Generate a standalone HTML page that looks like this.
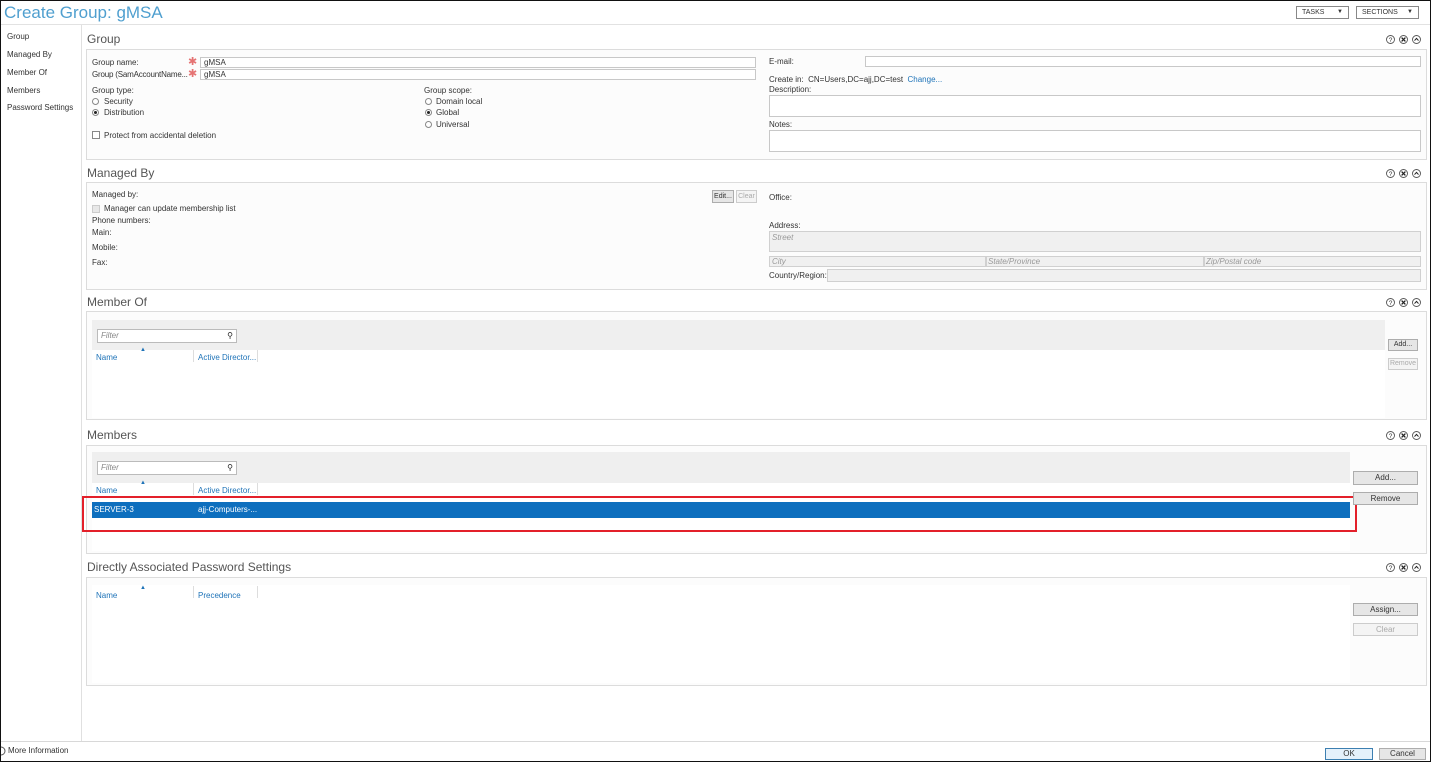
<!DOCTYPE html>
<html><head><meta charset="utf-8"><style>
*{margin:0;padding:0;box-sizing:border-box}
body{width:1431px;height:762px;position:relative;overflow:hidden;background:#fff;font-family:"Liberation Sans",sans-serif;color:#333}
.a{position:absolute}
.t{position:absolute;font-size:8px;white-space:nowrap;color:#333;line-height:10px}
.h{position:absolute;font-size:12px;color:#555;white-space:nowrap;line-height:14px}
.box{position:absolute;border:1px solid #dcdcdc;background:#fcfcfc}
.in{position:absolute;border:1px solid #c8c8c8;background:#fff;height:11px}
.gr{position:absolute;border:1px solid #d0d0d0;background:#f0f0f0}
.btn{position:absolute;border:1px solid #adadad;background:#e6e6e6;font-size:8px;text-align:center;line-height:10px;color:#333}
.dis{color:#aaa;border-color:#ccc;background:#f4f4f4}
.rad{position:absolute;width:7px;height:7px;border:1px solid #888;border-radius:50%;background:#fff}
.rad.on::after{content:"";position:absolute;left:1px;top:1px;width:3px;height:3px;border-radius:50%;background:#222}
.cb{position:absolute;width:8px;height:8px;border:1px solid #888;background:#fff}
.ic{position:absolute}
.lnk{color:#1e73b8}
.star{position:absolute;color:#e57373;font-size:11px;line-height:10px}
.grid{position:absolute;background:#fff}
.tb{position:absolute;background:#efefef}
.flt{position:absolute;border:1px solid #bbb;background:#fff;height:14px;font-size:8px;font-style:italic;color:#888;line-height:12px;padding-left:3px}
</style></head><body>
<svg width="0" height="0" style="position:absolute"><defs>
<g id="icons">
<circle cx="4.5" cy="4.5" r="4" fill="#fff" stroke="#555" stroke-width="0.9"/>
<text x="4.5" y="7" font-size="6.5" text-anchor="middle" font-family="Liberation Sans" fill="#333">?</text>
<circle cx="17.5" cy="4.5" r="4" fill="#fff" stroke="#555" stroke-width="0.9"/>
<path d="M15.6 2.6 L19.4 6.4 M19.4 2.6 L15.6 6.4" stroke="#222" stroke-width="1.3"/>
<circle cx="30.5" cy="4.5" r="4" fill="#fff" stroke="#555" stroke-width="0.9"/>
<path d="M28.5 5.6 L30.5 3.4 L32.5 5.6" fill="none" stroke="#222" stroke-width="1"/>
</g></defs></svg>
<div class="a" style="left:0;top:0;width:1431px;height:762px;border:1px solid #111;z-index:10;pointer-events:none"></div>
<div class="a" style="left:0;top:0;width:1431px;height:25px;border-bottom:1px solid #e2e2e2"></div>
<div class="a" style="left:4px;top:3px;font-size:17px;color:#4f9fcf;line-height:20px">Create Group: gMSA</div>
<div class="a" style="left:1296px;top:6px;width:53px;height:13px;border:1px solid #888;font-size:7px;line-height:11px;padding-left:5px">TASKS<span style="position:absolute;right:5px;font-size:6px">▼</span></div>
<div class="a" style="left:1356px;top:6px;width:63px;height:13px;border:1px solid #888;font-size:7px;line-height:11px;padding-left:5px">SECTIONS<span style="position:absolute;right:5px;font-size:6px">▼</span></div>
<div class="a" style="left:81px;top:25px;width:1px;height:716px;background:#e0e0e0"></div>
<div class="t" style="left:7px;top:32px">Group</div>
<div class="t" style="left:7px;top:50px">Managed By</div>
<div class="t" style="left:7px;top:68px">Member Of</div>
<div class="t" style="left:7px;top:86px">Members</div>
<div class="t" style="left:7px;top:103px">Password Settings</div>

<div class="h" style="left:87px;top:32px">Group</div>
<div class="box" style="left:86px;top:49px;width:1341px;height:111px"></div>
<div class="t" style="left:92px;top:58px">Group name:</div>
<div class="star" style="left:188px;top:57px">✱</div>
<div class="in" style="left:200px;top:57px;width:556px"></div><div class="t" style="left:204px;top:58px">gMSA</div>
<div class="t" style="left:92px;top:70px;letter-spacing:-0.2px">Group (SamAccountName...</div>
<div class="star" style="left:188px;top:69px">✱</div>
<div class="in" style="left:200px;top:69px;width:556px"></div><div class="t" style="left:204px;top:70px">gMSA</div>
<div class="t" style="left:92px;top:86px">Group type:</div>
<div class="rad" style="left:92px;top:98px"></div><div class="t" style="left:104px;top:97px">Security</div>
<div class="rad on" style="left:92px;top:109px"></div><div class="t" style="left:104px;top:108px">Distribution</div>
<div class="cb" style="left:92px;top:131px"></div><div class="t" style="left:104px;top:131px">Protect from accidental deletion</div>
<div class="t" style="left:424px;top:86px">Group scope:</div>
<div class="rad" style="left:425px;top:98px"></div><div class="t" style="left:436px;top:97px">Domain local</div>
<div class="rad on" style="left:425px;top:109px"></div><div class="t" style="left:436px;top:108px">Global</div>
<div class="rad" style="left:425px;top:121px"></div><div class="t" style="left:436px;top:120px">Universal</div>
<div class="t" style="left:769px;top:57px">E-mail:</div>
<div class="in" style="left:865px;top:56px;width:556px"></div>
<div class="t" style="left:769px;top:75px">Create in: &nbsp;CN=Users,DC=ajj,DC=test &nbsp;<span class="lnk">Change...</span></div>
<div class="t" style="left:769px;top:85px">Description:</div>
<div class="in" style="left:769px;top:95px;width:652px;height:22px"></div>
<div class="t" style="left:769px;top:120px">Notes:</div>
<div class="in" style="left:769px;top:130px;width:652px;height:22px"></div>

<div class="h" style="left:87px;top:166px">Managed By</div>
<div class="box" style="left:86px;top:182px;width:1341px;height:108px"></div>
<div class="t" style="left:92px;top:190px">Managed by:</div>
<div class="cb" style="left:92px;top:205px;background:#e8e8e8;border-color:#ccc"></div><div class="t" style="left:104px;top:204px">Manager can update membership list</div>
<div class="t" style="left:92px;top:216px">Phone numbers:</div>
<div class="t" style="left:92px;top:228px">Main:</div>
<div class="t" style="left:92px;top:243px">Mobile:</div>
<div class="t" style="left:92px;top:258px">Fax:</div>
<div class="btn" style="left:712px;top:190px;width:22px;height:13px;line-height:11px;font-size:7px">Edit...</div>
<div class="btn dis" style="left:736px;top:190px;width:21px;height:13px;line-height:11px;font-size:7px">Clear</div>
<div class="t" style="left:769px;top:193px">Office:</div>
<div class="t" style="left:769px;top:221px">Address:</div>
<div class="gr" style="left:769px;top:231px;width:652px;height:21px"></div><div class="t" style="left:772px;top:233px;font-style:italic;color:#999">Street</div>
<div class="gr" style="left:769px;top:256px;width:217px;height:11px"></div><div class="t" style="left:772px;top:257px;font-style:italic;color:#999">City</div>
<div class="gr" style="left:986px;top:256px;width:218px;height:11px"></div><div class="t" style="left:988px;top:257px;font-style:italic;color:#999">State/Province</div>
<div class="gr" style="left:1204px;top:256px;width:217px;height:11px"></div><div class="t" style="left:1206px;top:257px;font-style:italic;color:#999">Zip/Postal code</div>
<div class="t" style="left:769px;top:271px">Country/Region:</div>
<div class="gr" style="left:827px;top:269px;width:594px;height:13px"></div>

<div class="h" style="left:87px;top:295px">Member Of</div>
<div class="box" style="left:86px;top:311px;width:1341px;height:109px"></div>
<div class="tb" style="left:92px;top:320px;width:1293px;height:30px"></div>
<div class="grid" style="left:92px;top:350px;width:1293px;height:68px"></div>
<div class="flt" style="left:97px;top:329px;width:140px">Filter<span style="position:absolute;right:3px;font-style:normal;color:#222">⚲</span></div>
<div class="t lnk" style="left:96px;top:353px">Name</div><div class="t lnk" style="left:140px;top:345px;font-size:6px">▲</div>
<div class="a" style="left:193px;top:350px;width:1px;height:12px;background:#ddd"></div>
<div class="t lnk" style="left:198px;top:353px">Active Director...</div>
<div class="a" style="left:257px;top:350px;width:1px;height:12px;background:#ddd"></div>
<div class="btn" style="left:1388px;top:339px;width:30px;height:12px;font-size:7px">Add...</div>
<div class="btn dis" style="left:1388px;top:358px;width:30px;height:12px;font-size:7px">Remove</div>

<div class="h" style="left:87px;top:428px">Members</div>
<div class="box" style="left:86px;top:445px;width:1341px;height:109px"></div>
<div class="tb" style="left:92px;top:452px;width:1258px;height:31px"></div>
<div class="grid" style="left:92px;top:483px;width:1258px;height:68px"></div>
<div class="flt" style="left:97px;top:461px;width:140px">Filter<span style="position:absolute;right:3px;font-style:normal;color:#222">⚲</span></div>
<div class="t lnk" style="left:96px;top:486px">Name</div><div class="t lnk" style="left:140px;top:478px;font-size:6px">▲</div>
<div class="a" style="left:193px;top:483px;width:1px;height:12px;background:#ddd"></div>
<div class="t lnk" style="left:198px;top:486px">Active Director...</div>
<div class="a" style="left:257px;top:483px;width:1px;height:12px;background:#ddd"></div>
<div class="a" style="left:92px;top:502px;width:1258px;height:16px;background:#0e6fbe"></div>
<div class="t" style="left:94px;top:505px;color:#fff">SERVER-3</div>
<div class="t" style="left:198px;top:505px;color:#fff">ajj-Computers-...</div>
<div class="a" style="left:82px;top:496px;width:1275px;height:36px;border:2px solid #e3202a"></div>
<div class="btn" style="left:1353px;top:471px;width:65px;height:14px;line-height:12px">Add...</div>
<div class="btn" style="left:1353px;top:492px;width:65px;height:13px;line-height:11px">Remove</div>

<div class="h" style="left:87px;top:560px">Directly Associated Password Settings</div>
<div class="box" style="left:86px;top:577px;width:1341px;height:109px"></div>
<div class="grid" style="left:92px;top:585px;width:1258px;height:98px"></div>
<div class="t lnk" style="left:96px;top:591px">Name</div><div class="t lnk" style="left:140px;top:583px;font-size:6px">▲</div>
<div class="a" style="left:193px;top:586px;width:1px;height:12px;background:#ddd"></div>
<div class="t lnk" style="left:198px;top:591px">Precedence</div>
<div class="a" style="left:257px;top:586px;width:1px;height:12px;background:#ddd"></div>
<div class="btn" style="left:1353px;top:603px;width:65px;height:13px;line-height:11px">Assign...</div>
<div class="btn dis" style="left:1353px;top:623px;width:65px;height:13px;line-height:11px">Clear</div>

<svg class="ic" style="left:1386px;top:35px" width="36" height="9"><use href="#icons"/></svg>
<svg class="ic" style="left:1386px;top:169px" width="36" height="9"><use href="#icons"/></svg>
<svg class="ic" style="left:1386px;top:298px" width="36" height="9"><use href="#icons"/></svg>
<svg class="ic" style="left:1386px;top:431px" width="36" height="9"><use href="#icons"/></svg>
<svg class="ic" style="left:1386px;top:563px" width="36" height="9"><use href="#icons"/></svg>

<div class="a" style="left:0;top:741px;width:1431px;height:1px;background:#d8d8d8"></div>
<svg class="a" style="left:-4px;top:746px" width="10" height="10"><circle cx="5" cy="5" r="4" fill="none" stroke="#555"/></svg>
<div class="t" style="left:8px;top:746px">More Information</div>
<div class="btn" style="left:1325px;top:748px;width:48px;height:12px;border-color:#3c7fb1;background:#e5f1fb">OK</div>
<div class="btn" style="left:1379px;top:748px;width:47px;height:12px">Cancel</div>
</body></html>
